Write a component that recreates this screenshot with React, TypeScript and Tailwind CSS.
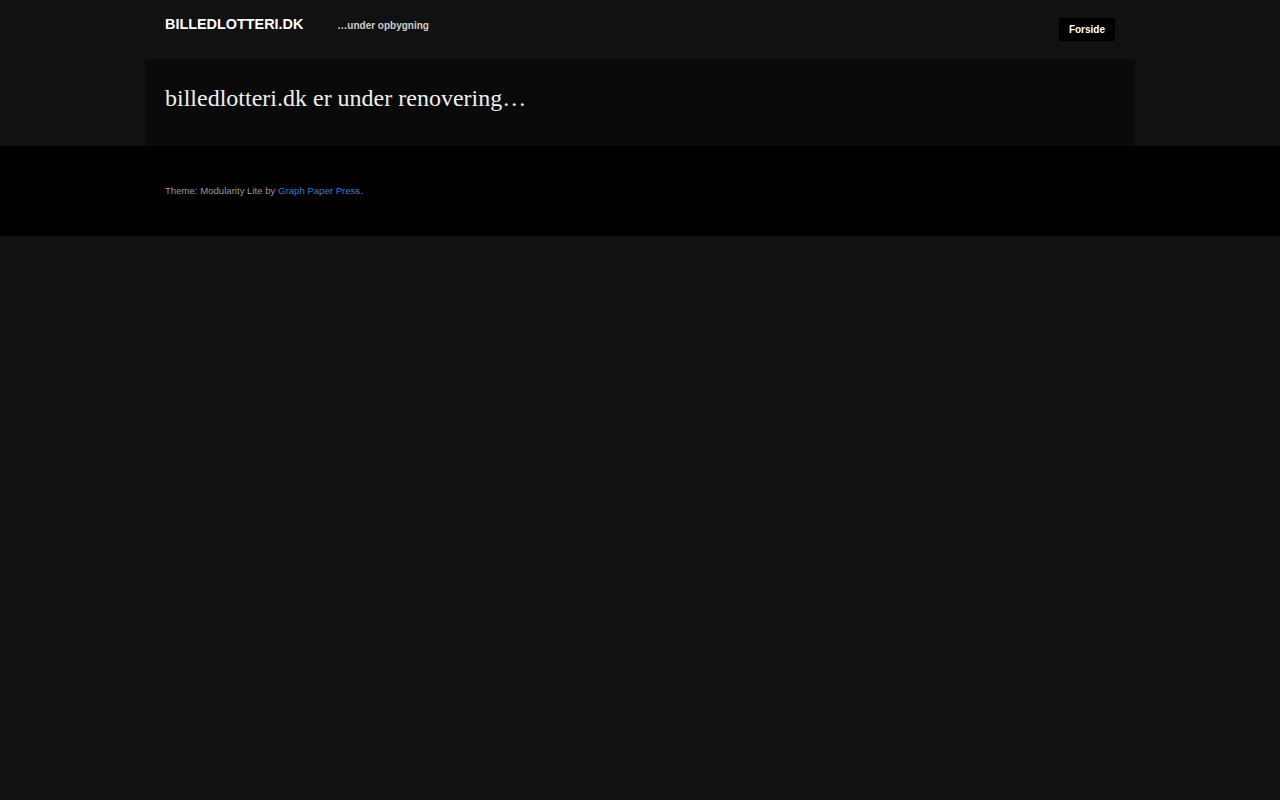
export default function App() {
  return (
    <div className="min-h-[800px] bg-[#111111] font-['Liberation_Sans',Arial,sans-serif]">
      <div className="mx-auto w-[990px]">
        <header className="flex h-[59px] items-start justify-between px-5">
          <div className="flex items-baseline pt-[15px]">
            <h1 className="text-[14.4px] font-bold leading-[18px] text-white">BILLEDLOTTERI.DK</h1>
            <p className="ml-[34px] text-[10px] font-bold text-[#cccccc]">…under opbygning</p>
          </div>
          <nav className="pt-[18px]">
            <a href="#" className="flex h-[23px] items-center bg-black px-[10px] text-[10px] font-bold text-white">
              Forside
            </a>
          </nav>
        </header>
        <main className="h-[87px] bg-[#0a0a0a] px-5 pt-[25px]">
          <h2 className="font-['Liberation_Serif','Times_New_Roman',serif] text-[24px] leading-[28px] text-[#eeeeee]">
            billedlotteri.dk er under renovering…
          </h2>
        </main>
      </div>
      <footer className="h-[90px] bg-black">
        <div className="mx-auto w-[990px] px-5 pt-[38px]">
          <p className="text-[9.6px] text-[#999999]">
            Theme: Modularity Lite by{" "}
            <a href="#" className="text-[#3d7ac6]">Graph Paper Press</a>.
          </p>
        </div>
      </footer>
    </div>
  );
}
